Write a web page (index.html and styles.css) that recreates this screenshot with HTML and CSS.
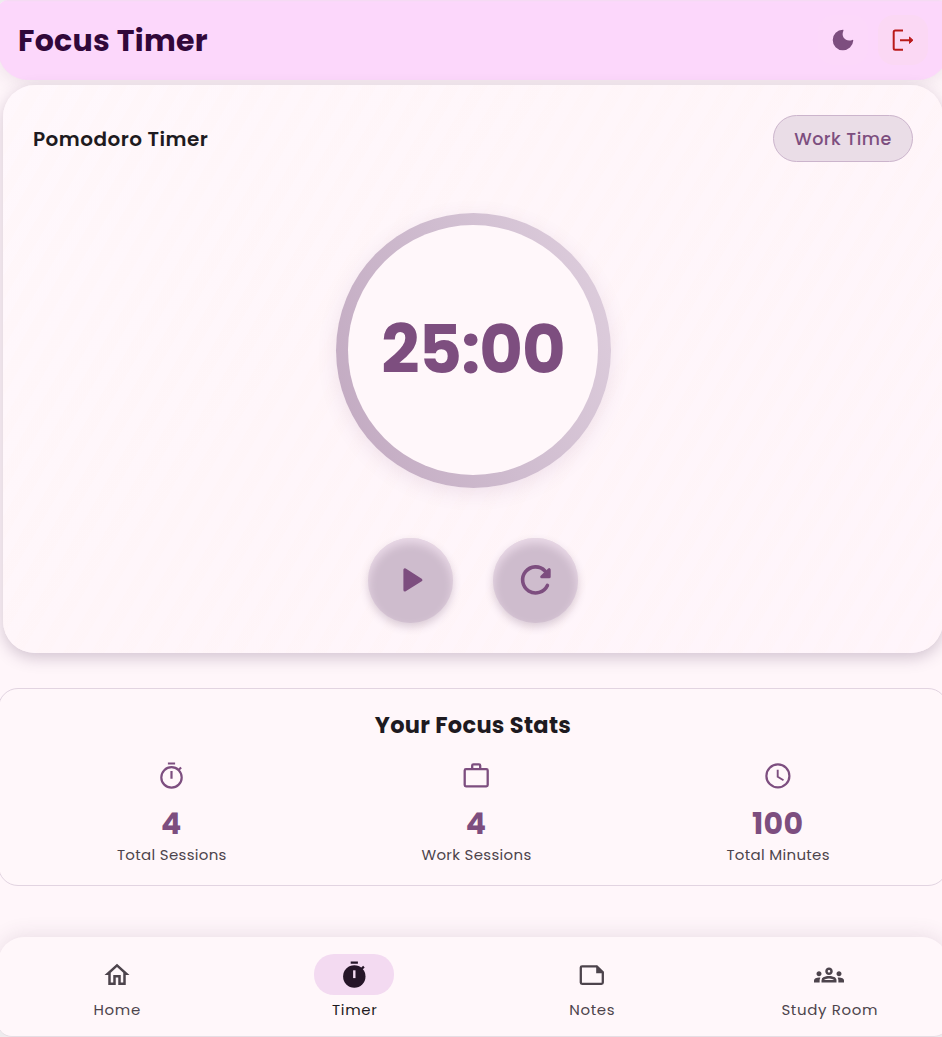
FILE: index.html
```html
<!DOCTYPE html>
<html lang="en">
<head>
<meta charset="utf-8">
<title>Focus Timer</title>
<link rel="stylesheet" href="styles.css">
</head>
<body>
<div class="shell">
  <header class="topbar">
    <h1 class="topbar-title">Focus Timer</h1>
    <div class="actions">
      <button class="icon-btn" aria-label="Theme">
        <svg width="22" height="22" viewBox="0 0 22 22"><path d="M10.800.7A10.300 10.300 0 1 0 21.300 11.600C21.300 10.800 20.700 10.700 20.300 10.900C14.600 13.500 8.600 8.400 11.300 2.100C11.700 1.200 11.500.7 10.800.7Z" fill="#7d4e7f"/></svg>
      </button>
      <button class="icon-btn danger" aria-label="Log out">
        <svg width="22" height="22" viewBox="0 0 22 22" fill="none" stroke="#ba1a1a" stroke-width="2"><path d="M11 1.500H3.200Q1.700 1.500 1.700 3v16.200Q1.700 20.700 3.200 20.700H11M8 11.200h10"/><path d="M17.500 8 21 11.200l-3.500 3.200Z" fill="#ba1a1a" stroke-width=".9"/></svg>
      </button>
    </div>
  </header>

  <main class="timer-card">
    <div class="card-head">
      <h2 class="card-title">Pomodoro Timer</h2>
      <span class="badge">Work Time</span>
    </div>
    <div class="ring"><div class="dial">25:00</div></div>
    <div class="controls">
      <button class="round" aria-label="Start">
        <svg width="40" height="40" viewBox="0 0 40 40"><path d="M13.900 9.800v20.300l16-10.100Z" fill="#7d4e7f" stroke="#7d4e7f" stroke-width="3" stroke-linejoin="round"/></svg>
      </button>
      <button class="round" aria-label="Reset">
        <svg width="40" height="40" viewBox="0 0 40 40" fill="none" stroke="#7d4e7f" stroke-linecap="round" stroke-linejoin="round"><path d="M31.400 25.400A13 13 0 1 1 29 10.900" stroke-width="3.600"/><path d="M33.200 9.700v7.100h-7.500Z" fill="#7d4e7f" stroke-width="3"/></svg>
      </button>
    </div>
  </main>

  <section class="stats">
    <h2 class="stats-title">Your Focus Stats</h2>
    <div class="stats-row">
      <div class="stat">
        <svg width="30" height="30" viewBox="0 0 30 30" fill="none" stroke="#7d4e7f" stroke-width="2.200"><circle cx="15.500" cy="16.400" r="10.200"/><path d="M11.900 2.500h7.200M15.500 10v7.800M22.500 9l2.600-2.500"/></svg>
        <strong class="value">4</strong><span class="label">Total Sessions</span>
      </div>
      <div class="stat">
        <svg width="30" height="30" viewBox="0 0 30 30" fill="none" stroke="#7d4e7f" stroke-width="2.300"><rect x="3.700" y="8.200" width="23" height="17.200" rx="1.300"/><path d="M11.200 8.200V4.600Q11.200 3.400 12.400 3.400h5.600Q19.200 3.400 19.200 4.600V8.200"/></svg>
        <strong class="value">4</strong><span class="label">Work Sessions</span>
      </div>
      <div class="stat narrow">
        <svg width="30" height="30" viewBox="0 0 30 30" fill="none" stroke="#7d4e7f" stroke-width="2.200"><circle cx="14.900" cy="14.900" r="11.500"/><path d="M14.700 8.700v7l5.800 3.500" stroke-width="1.900"/></svg>
        <strong class="value">100</strong><span class="label">Total Minutes</span>
      </div>
    </div>
  </section>

  <nav class="tabs">
    <a class="tab"><span class="pill"><svg width="30" height="30" viewBox="0 0 24 24" fill="#4d444c"><path d="m12 5.690 5 4.500V18h-2v-6H9v6H7v-7.810l5-4.500M12 3 2 12h3v8h6v-6h2v6h6v-8h3L12 3z"/></svg></span><span class="tab-label">Home</span></a>
    <a class="tab active"><span class="pill"><svg width="30" height="30" viewBox="0 0 30 30"><circle cx="15.300" cy="16.500" r="11.200" fill="#251528"/><path d="M11.700 2.600h7.200M22.300 9.100l2.600-2.500" stroke="#251528" stroke-width="2.200"/><path d="M15.300 10.300v7.800" stroke="#f3daf1" stroke-width="2.400"/></svg></span><span class="tab-label">Timer</span></a>
    <a class="tab"><span class="pill"><svg width="30" height="30" viewBox="0 0 30 30"><path d="M5.100 6.300h14.700l6 6v10.300q0 1.300-1.300 1.300H5.100q-1.300 0-1.300-1.300v-15q0-1.300 1.300-1.300Z" fill="none" stroke="#4d444c" stroke-width="2.300"/><path d="M19.200 5.500v7.800h7.500Z" fill="#4d444c"/></svg></span><span class="tab-label">Notes</span></a>
    <a class="tab"><span class="pill"><svg width="30" height="30" viewBox="0 0 24 24" fill="#4d444c"><path d="M4 13c1.100 0 2-.9 2-2s-.9-2-2-2-2 .9-2 2 .9 2 2 2zm1.130 1.100c-.370-.060-.740-.100-1.130-.100-.990 0-1.930.210-2.780.580A2.010 2.010 0 0 0 0 16.430V18h4.500v-1.610c0-.830.230-1.610.630-2.290zM20 13c1.100 0 2-.9 2-2s-.9-2-2-2-2 .9-2 2 .9 2 2 2zm4 3.430c0-.810-.480-1.530-1.220-1.850A6.950 6.950 0 0 0 20 14c-.390 0-.760.040-1.130.100.400.680.630 1.460.630 2.290V18H24v-1.570zM16.240 13.650C15.070 13.130 13.630 12.750 12 12.750s-3.070.390-4.240.900A2.988 2.988 0 0 0 6 16.390V18h12v-1.610c0-1.180-.680-2.260-1.760-2.740zM8.070 16c.090-.230.130-.390.910-.690.970-.380 1.990-.560 3.020-.560s2.050.180 3.020.560c.770.300.810.460.910.690H8.070zM12 8c.550 0 1 .450 1 1s-.450 1-1 1-1-.450-1-1 .450-1 1-1m0-2C10.340 6 9 7.340 9 9s1.340 3 3 3 3-1.340 3-3-1.340-3-3-3z"/></svg></span><span class="tab-label">Study Room</span></a>
  </nav>
</div>
</body>
</html>
```
FILE: styles.css
```css
* { box-sizing: border-box; }
html, body { margin: 0; height: 100%; overflow: hidden; }
body { background: #eeecee; font-family: Poppins, Inter, sans-serif; }
h1, h2 { margin: 0; }
button { border: 0; padding: 0; }
svg { display: block; flex: none; }

.shell {
  width: 950px;
  height: 1037px;
  margin-left: -2px;
  display: flex;
  flex-direction: column;
  background: #fff6fa;
  border-radius: 10px 10px 14px 14px;
  border-bottom: 1px solid #e5dee4;
  overflow: hidden;
}

.topbar {
  height: 80px;
  flex: none;
  display: flex;
  align-items: center;
  justify-content: space-between;
  padding: 2px 20px 0;
  background: #fcd7fb;
  border-radius: 0 0 30px 30px;
  box-shadow: 0 2px 20px rgba(80, 50, 80, .12), inset 0 1px 2px #f3dcf1;
}
.topbar-title {
  font-size: 30px;
  line-height: 44px;
  font-weight: 700;
  letter-spacing: .3px;
  color: #31083a;
}
.actions { display: flex; gap: 10px; margin-top: -2px; }
.icon-btn {
  width: 50px;
  height: 50px;
  border-radius: 16px;
  display: flex;
  align-items: center;
  justify-content: center;
  background: #fcd8fa;
}
.danger { background: #fbd8f4; }

.timer-card {
  width: 940px;
  height: 568px;
  flex: none;
  margin: 5px 0 0 5px;
  padding: 30px;
  border-radius: 32px;
  background:
    repeating-linear-gradient(120deg, rgba(255, 243, 246, .2) 0 12px, rgba(255, 246, 255, .2) 12px 24px),
    linear-gradient(135deg, #fff8fb, #fff6f9 40%, #fff5fa);
  box-shadow: 0 5px 15px rgba(80, 50, 90, .25);
}
.card-head {
  height: 47px;
  display: flex;
  align-items: center;
  justify-content: space-between;
}
.card-title { font-size: 20px; font-weight: 600; color: #1e1a20; letter-spacing: .45px; }
.badge {
  width: 140px;
  height: 47px;
  line-height: 46px;
  text-align: center;
  border: 1px solid #cbb4cc;
  border-radius: 24px;
  background: #eadde7;
  color: #7d4e7f;
  font-size: 17.500px;
  font-weight: 500;
  letter-spacing: .5px;
}
.ring {
  width: 275px;
  height: 275px;
  margin: 50.500px auto 0;
  padding: 12.500px;
  border-radius: 50%;
  background: linear-gradient(70deg, #c1a8c0, #cfbccf 50%, #dfcfde);
  box-shadow: 0 5px 20px rgba(125, 78, 127, .12);
}
.dial {
  width: 250px;
  height: 250px;
  border-radius: 50%;
  background: #fff7fa;
  color: #7d4e7f;
  font-size: 67px;
  font-weight: 700;
  line-height: 250px;
  text-align: center;
  letter-spacing: -.9px;
}
.controls { display: flex; justify-content: center; gap: 40px; margin-top: 50px; }
.round {
  width: 85px;
  height: 85px;
  border-radius: 50%;
  display: flex;
  align-items: center;
  justify-content: center;
  background: #cebccd;
  box-shadow: 0 4px 8px rgba(80, 50, 85, .22), inset 0 5px 10px rgba(255, 240, 252, .6);
}

.stats {
  height: 198px;
  flex: none;
  margin-top: 35px;
  border: 1px solid #e2d4e1;
  border-radius: 20px;
  padding: 20px;
  background: #fff7fa;
}
.stats-title {
  text-align: center;
  font-size: 22.500px;
  line-height: 33px;
  font-weight: 700;
  letter-spacing: .3px;
  color: #1e1a20;
}
.stats-row { display: flex; justify-content: space-around; margin-top: 19px; }
.stat { width: 110px; display: flex; flex-direction: column; align-items: center; }
.narrow { width: 104px; }
.value { font-size: 30px; line-height: 44px; margin-top: 11px; color: #7d4e7f; font-weight: 700; letter-spacing: .3px; }
.label { font-size: 15px; line-height: 20px; margin-top: -1px; margin-left: 1px; color: #4d444c; white-space: nowrap; letter-spacing: .31px; }

.tabs {
  height: 99px;
  flex: none;
  margin-top: 51px;
  display: grid;
  grid-template-columns: repeat(4, 1fr);
  padding-top: 17px;
  border-radius: 26px 26px 14px 14px;
  background: #fff7fa;
  box-shadow: 0 -2px 20px rgba(80, 50, 80, .12);
}
.tab { display: flex; flex-direction: column; align-items: center; color: #4d444c; }
.pill { width: 80px; height: 41px; display: flex; align-items: center; justify-content: center; border-radius: 20px; }
.active { color: #1e1a20; }
.active .pill { background: #f3daf1; }
.tab-label { font-size: 15px; line-height: 20px; margin-top: 5px; margin-left: 1px; letter-spacing: .65px; white-space: nowrap; }
```
